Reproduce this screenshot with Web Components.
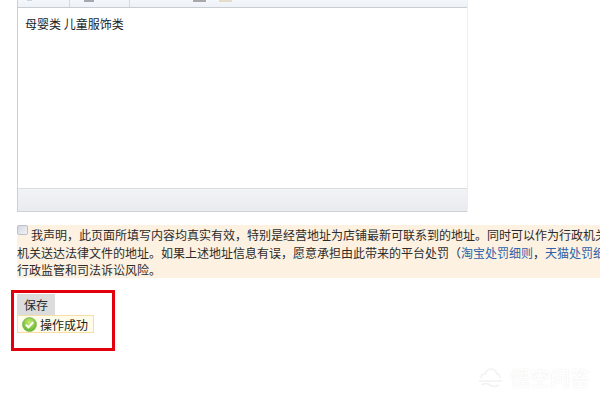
<!DOCTYPE html>
<html lang="zh">
<head>
<meta charset="utf-8">
<title>店铺基本设置</title>
<style>
  html, body { margin: 0; background: #fff; overflow: hidden; }
  body { width: 600px; height: 400px; font: 12px "Noto Sans CJK SC", "Liberation Sans", sans-serif; color: #2b2b2b; }
</style>
</head>
<body>
<shop-form>
  <rich-editor>母婴类 儿童服饰类</rich-editor>
  <legal-notice></legal-notice>
  <save-panel></save-panel>
</shop-form>
<brand-mark></brand-mark>

<script>
// page column: everything hangs off the same 17px left edge
class ShopForm extends HTMLElement {
  constructor() {
    super();
    this.attachShadow({ mode: 'open' }).innerHTML = `
      <style>
        :host { display: block; position: relative; width: 600px; height: 400px; overflow: hidden; padding-left: 17px; box-sizing: border-box; }
      </style>
      <slot></slot>
    `;
  }
}

// only the bottom of the toolbar is still on screen, so the icons are cut off at the top
const TOOLBAR_BITS = [
  { gap: 9, w: 5, h: 1, color: '#ccd3dc' },
  { gap: 37, w: 1, h: 7, color: '#d3d9e1' },
  { gap: 14, w: 10, h: 2, color: '#a3a8af' },
  { gap: 35, w: 1, h: 7, color: '#d3d9e1' },
  { gap: 63, w: 13, h: 2, color: '#a8a8a8' },
  { gap: 13, w: 13, h: 2, color: '#e4dcc8' },
];

class RichEditor extends HTMLElement {
  constructor() {
    super();
    const bits = TOOLBAR_BITS.map(b =>
      `<i style="margin-left:${b.gap}px;width:${b.w}px;height:${b.h}px;background:${b.color}"></i>`
    ).join('');
    this.attachShadow({ mode: 'open' }).innerHTML = `
      <style>
        :host { display: block; width: 451px; box-sizing: border-box; border-left: 1px solid #cfcfcf; border-right: 1px solid #eeeeee; }
        .toolbar { display: flex; align-items: flex-start; height: 7px; background: linear-gradient(#f4f7fb, #edf2f8); border-bottom: 1px solid #c9ccd0; overflow: hidden; }
        .toolbar i { display: block; flex: none; }
        .body { height: 180px; box-sizing: border-box; padding: 7px 7px; background: #fff; font-size: 12px; line-height: 18px; color: #222; }
        .status { height: 24px; box-sizing: border-box; background: linear-gradient(#f2f3f6, #e9ebef); border-top: 1px solid #dcdde0; border-bottom: 1px solid #cdd0d8; }
      </style>
      <div class="toolbar">${bits}</div>
      <div class="body"><slot></slot></div>
      <div class="status"></div>
    `;
  }
}

class LegalNotice extends HTMLElement {
  constructor() {
    super();
    this.attachShadow({ mode: 'open' }).innerHTML = `
      <style>
        :host { display: block; width: 583px; height: 53px; margin-top: 13px; background: #fdf1e1; overflow: hidden; white-space: nowrap; }
        .text { padding-top: 1px; font-size: 12px; line-height: 17.5px; color: #2b2b2b; }
        input { appearance: none; float: left; box-sizing: border-box; width: 11px; height: 10px; margin: -1px 3px 0 0; border: 1px solid #bcc0cc; border-radius: 2px; background: linear-gradient(135deg, #d4d7e0, #f2f3f7); }
        a { color: #2c62a8; text-decoration: none; }
      </style>
      <div class="text"><input type="checkbox">我声明，此页面所填写内容均真实有效，特别是经营地址为店铺最新可联系到的地址。同时可以作为行政机关和司法<br>机关送达法律文件的地址。如果上述地址信息有误，愿意承担由此带来的平台处罚（<a href="#">淘宝处罚细则</a>，<a href="#">天猫处罚细则</a>）<br>行政监管和司法诉讼风险。</div>
    `;
  }
}

class SavePanel extends HTMLElement {
  constructor() {
    super();
    this.attachShadow({ mode: 'open' }).innerHTML = `
      <style>
        :host { display: block; margin-top: 16px; }
        button { display: block; width: 38px; height: 21px; padding: 0; border: 0; background: #dcdcdc; font: inherit; font-size: 12px; color: #2b2b2b; }
        .ok { display: flex; align-items: center; gap: 3px; width: 77px; height: 18px; box-sizing: border-box; padding-left: 4px; background: #fffdea; border: 1px solid #f6dfa6; font-size: 12px; color: #222; white-space: nowrap; }
        svg { flex: none; }
        .marker { position: absolute; left: 11px; top: 290px; width: 104px; height: 61px; box-sizing: border-box; border: 3px solid #e2000f; }
      </style>
      <button type="button">保存</button>
      <div class="ok">
        <svg width="15" height="15" viewBox="0 0 15 15">
          <defs><radialGradient id="g" cx="50%" cy="35%" r="70%"><stop offset="0" stop-color="#c8ec6e"/><stop offset="1" stop-color="#5cae2c"/></radialGradient></defs>
          <circle cx="7.5" cy="7.5" r="7" fill="url(#g)" stroke="#6aa84a" stroke-width=".6"/>
          <path d="M3.8 7.6l2.6 2.6 4.8-5" fill="none" stroke="#fff" stroke-width="2"/>
        </svg>
        <span>操作成功</span>
      </div>
      <div class="marker"></div>
    `;
  }
}

// faint watermark, bottom right corner
class BrandMark extends HTMLElement {
  constructor() {
    super();
    this.attachShadow({ mode: 'open' }).innerHTML = `
      <style>
        :host { position: absolute; left: 478px; top: 365px; display: flex; align-items: center; gap: 7px; }
        span { font-size: 20px; line-height: 26px; color: #fff; text-shadow: 0 0 2px rgba(0,0,0,.09); white-space: nowrap; }
      </style>
      <svg width="25" height="21" viewBox="0 0 25 21">
        <g fill="none" stroke="#f2f2f2" stroke-width="1.6">
          <path d="M3 10c0-3 2-4 4-4 1-3 3-5 6-5s5 2 6 5c2 0 3 2 3 4"/>
          <path d="M1 13h23M4 17c3-2 5-2 8 0s6 2 9 0"/>
        </g>
      </svg>
      <span>悟空问答</span>
    `;
  }
}

customElements.define('shop-form', ShopForm);
customElements.define('rich-editor', RichEditor);
customElements.define('legal-notice', LegalNotice);
customElements.define('save-panel', SavePanel);
customElements.define('brand-mark', BrandMark);
</script>
</body>
</html>
